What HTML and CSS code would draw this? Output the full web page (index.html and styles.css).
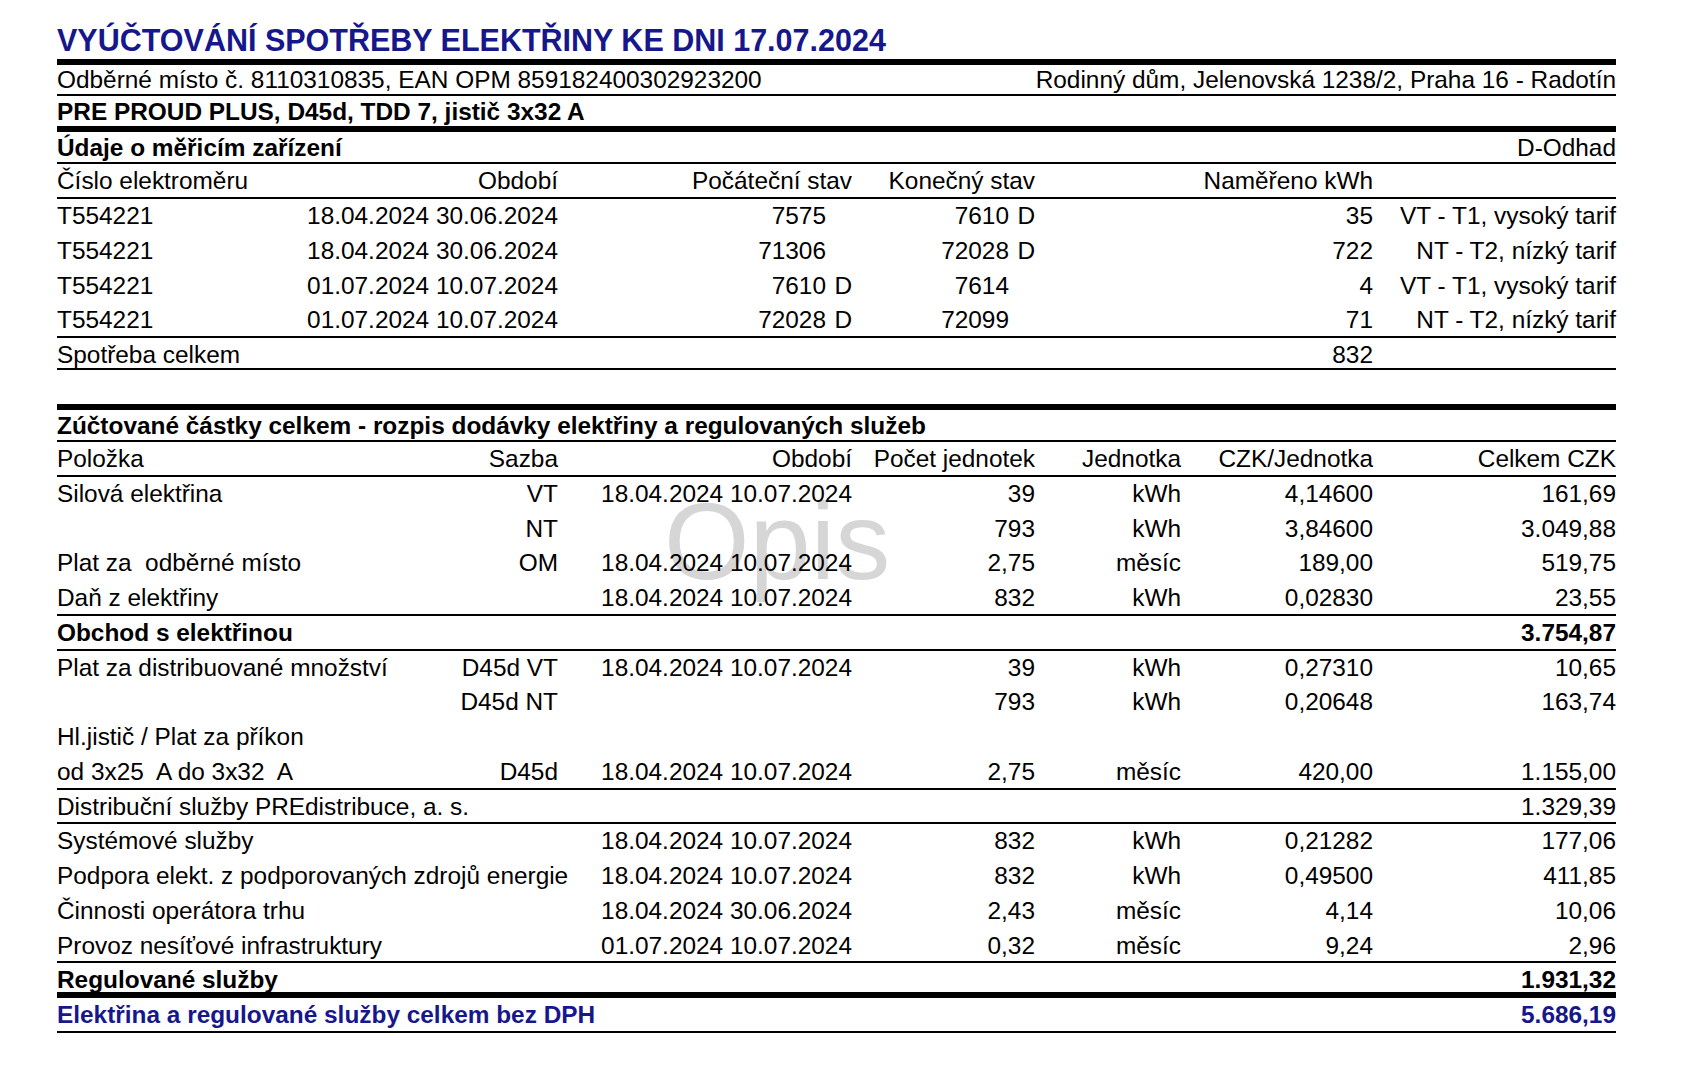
FILE: index.html
```html
<!DOCTYPE html>
<html lang="cs">
<head>
<meta charset="utf-8">
<title>Vyúčtování spotřeby elektřiny</title>
<link rel="stylesheet" href="styles.css">
</head>
<body>
<div class="page">
  <div class="watermark">Opis</div>
  <h1 class="title">VYÚČTOVÁNÍ SPOTŘEBY ELEKTŘINY KE DNI 17.07.2024</h1>

  <div class="row split place">
    <span>Odběrné místo č. 8110310835, EAN OPM 859182400302923200</span>
    <span>Rodinný dům, Jelenovská 1238/2, Praha 16 - Radotín</span>
  </div>
  <div class="row product bold">PRE PROUD PLUS, D45d, TDD 7, jistič 3x32 A</div>
  <div class="row split section">
    <span class="bold">Údaje o měřicím zařízení</span>
    <span>D-Odhad</span>
  </div>

  <div class="row t1 thin">
    <span>Číslo elektroměru</span>
    <span class="r">Období</span>
    <span class="r">Počáteční stav</span>
    <span class="r">Konečný stav</span>
    <span class="r">Naměřeno kWh</span>
    <span></span>
  </div>
  <div class="row t1">
    <span>T554221</span>
    <span class="r">18.04.2024 30.06.2024</span>
    <span class="r">7575<span class="sx"></span></span>
    <span class="r">7610<span class="sx">D</span></span>
    <span class="r">35</span>
    <span class="r">VT - T1, vysoký tarif</span>
  </div>
  <div class="row t1">
    <span>T554221</span>
    <span class="r">18.04.2024 30.06.2024</span>
    <span class="r">71306<span class="sx"></span></span>
    <span class="r">72028<span class="sx">D</span></span>
    <span class="r">722</span>
    <span class="r">NT - T2, nízký tarif</span>
  </div>
  <div class="row t1">
    <span>T554221</span>
    <span class="r">01.07.2024 10.07.2024</span>
    <span class="r">7610<span class="sx">D</span></span>
    <span class="r">7614<span class="sx"></span></span>
    <span class="r">4</span>
    <span class="r">VT - T1, vysoký tarif</span>
  </div>
  <div class="row t1 thin">
    <span>T554221</span>
    <span class="r">01.07.2024 10.07.2024</span>
    <span class="r">72028<span class="sx">D</span></span>
    <span class="r">72099<span class="sx"></span></span>
    <span class="r">71</span>
    <span class="r">NT - T2, nízký tarif</span>
  </div>
  <div class="row t1 thin total1">
    <span>Spotřeba celkem</span>
    <span></span><span></span><span></span>
    <span class="r">832</span>
    <span></span>
  </div>

  <div class="row section second bold">Zúčtované částky celkem - rozpis dodávky elektřiny a regulovaných služeb</div>

  <div class="row t2 thin">
    <span>Položka</span>
    <span class="r">Sazba</span>
    <span class="r">Období</span>
    <span class="r">Počet jednotek</span>
    <span class="r">Jednotka</span>
    <span class="r">CZK/Jednotka</span>
    <span class="r">Celkem CZK</span>
  </div>
  <div class="row t2">
    <span>Silová elektřina</span>
    <span class="r">VT</span>
    <span class="r">18.04.2024 10.07.2024</span>
    <span class="r">39</span>
    <span class="r">kWh</span>
    <span class="r">4,14600</span>
    <span class="r">161,69</span>
  </div>
  <div class="row t2">
    <span></span>
    <span class="r">NT</span>
    <span class="r"></span>
    <span class="r">793</span>
    <span class="r">kWh</span>
    <span class="r">3,84600</span>
    <span class="r">3.049,88</span>
  </div>
  <div class="row t2">
    <span>Plat za  odběrné místo</span>
    <span class="r">OM</span>
    <span class="r">18.04.2024 10.07.2024</span>
    <span class="r">2,75</span>
    <span class="r">měsíc</span>
    <span class="r">189,00</span>
    <span class="r">519,75</span>
  </div>
  <div class="row t2 thin">
    <span>Daň z elektřiny</span>
    <span class="r"></span>
    <span class="r">18.04.2024 10.07.2024</span>
    <span class="r">832</span>
    <span class="r">kWh</span>
    <span class="r">0,02830</span>
    <span class="r">23,55</span>
  </div>
  <div class="row t2 thin bold">
    <span class="label">Obchod s elektřinou</span>
    <span class="r">3.754,87</span>
  </div>

  <div class="row t2">
    <span>Plat za distribuované množství</span>
    <span class="r">D45d VT</span>
    <span class="r">18.04.2024 10.07.2024</span>
    <span class="r">39</span>
    <span class="r">kWh</span>
    <span class="r">0,27310</span>
    <span class="r">10,65</span>
  </div>
  <div class="row t2">
    <span></span>
    <span class="r">D45d NT</span>
    <span class="r"></span>
    <span class="r">793</span>
    <span class="r">kWh</span>
    <span class="r">0,20648</span>
    <span class="r">163,74</span>
  </div>
  <div class="row t2">
    <span class="label">Hl.jistič / Plat za příkon</span>
    <span></span>
  </div>
  <div class="row t2 thin">
    <span>od 3x25  A do 3x32  A</span>
    <span class="r">D45d</span>
    <span class="r">18.04.2024 10.07.2024</span>
    <span class="r">2,75</span>
    <span class="r">měsíc</span>
    <span class="r">420,00</span>
    <span class="r">1.155,00</span>
  </div>
  <div class="row t2 thin">
    <span class="label">Distribuční služby PREdistribuce, a. s.</span>
    <span class="r">1.329,39</span>
  </div>

  <div class="row t2">
    <span>Systémové služby</span>
    <span class="r"></span>
    <span class="r">18.04.2024 10.07.2024</span>
    <span class="r">832</span>
    <span class="r">kWh</span>
    <span class="r">0,21282</span>
    <span class="r">177,06</span>
  </div>
  <div class="row t2">
    <span>Podpora elekt. z podporovaných zdrojů energie</span>
    <span class="r"></span>
    <span class="r">18.04.2024 10.07.2024</span>
    <span class="r">832</span>
    <span class="r">kWh</span>
    <span class="r">0,49500</span>
    <span class="r">411,85</span>
  </div>
  <div class="row t2">
    <span>Činnosti operátora trhu</span>
    <span class="r"></span>
    <span class="r">18.04.2024 30.06.2024</span>
    <span class="r">2,43</span>
    <span class="r">měsíc</span>
    <span class="r">4,14</span>
    <span class="r">10,06</span>
  </div>
  <div class="row t2 thin">
    <span>Provoz nesíťové infrastruktury</span>
    <span class="r"></span>
    <span class="r">01.07.2024 10.07.2024</span>
    <span class="r">0,32</span>
    <span class="r">měsíc</span>
    <span class="r">9,24</span>
    <span class="r">2,96</span>
  </div>
  <div class="row t2 thick bold">
    <span class="label">Regulované služby</span>
    <span class="r">1.931,32</span>
  </div>
  <div class="row t2 thin bold navy">
    <span class="label">Elektřina a regulované služby celkem bez DPH</span>
    <span class="r">5.686,19</span>
  </div>
</div>
</body>
</html>
```

FILE: styles.css
```css
html {
  background: #ffffff;
}

html, body {
  margin: 0;
  padding: 0;
}

body {
  font-family: "Liberation Sans", Arial, Helvetica, sans-serif;
  font-size: 24.4px;
  color: #000000;
}

.page {
  position: relative;
  z-index: 0;
  width: 1559px;
  padding: 0 71px 40px 57px;
}

.watermark {
  position: absolute;
  z-index: -1;
  left: 664px;
  top: 486px;
  font-size: 110px;
  line-height: 110px;
  color: #d6d6d6;
  white-space: nowrap;
}

.title {
  box-sizing: border-box;
  height: 59px;
  margin: 0;
  padding-top: 25px;
  font-size: 30.5px;
  line-height: 30px;
  font-weight: bold;
  color: #17178c;
  white-space: nowrap;
}

.bold {
  font-weight: bold;
}

.navy {
  color: #17178c;
}

.row {
  box-sizing: border-box;
  height: 34.75px;
  line-height: 34px;
  white-space: pre;
}

.row > span {
  white-space: pre;
}

.split {
  display: flex;
  justify-content: space-between;
}

.place {
  height: 37px;
  line-height: 29px;
  border-top: 6px solid #000;
  border-bottom: 2px solid #000;
}

.product {
  height: 30px;
  line-height: 31px;
}

.section {
  height: 38.25px;
  line-height: 32px;
  border-top: 6px solid #000;
  border-bottom: 2px solid #000;
}

.total1 {
  height: 31.5px;
}

.second {
  height: 38px;
  margin-top: 34.5px;
}

.thin {
  border-bottom: 2px solid #000;
}

.thick {
  border-bottom: 6px solid #000;
}

.t1 {
  display: grid;
  grid-template-columns: 243px 258px 294px 183px 338px 243px;
}

.t2 {
  display: grid;
  grid-template-columns: 401px 100px 294px 183px 146px 192px 243px;
}

.t2 .label {
  grid-column: 1 / 7;
}

.r {
  text-align: right;
}

.sx {
  display: inline-block;
  width: 26px;
  text-align: right;
}
```
